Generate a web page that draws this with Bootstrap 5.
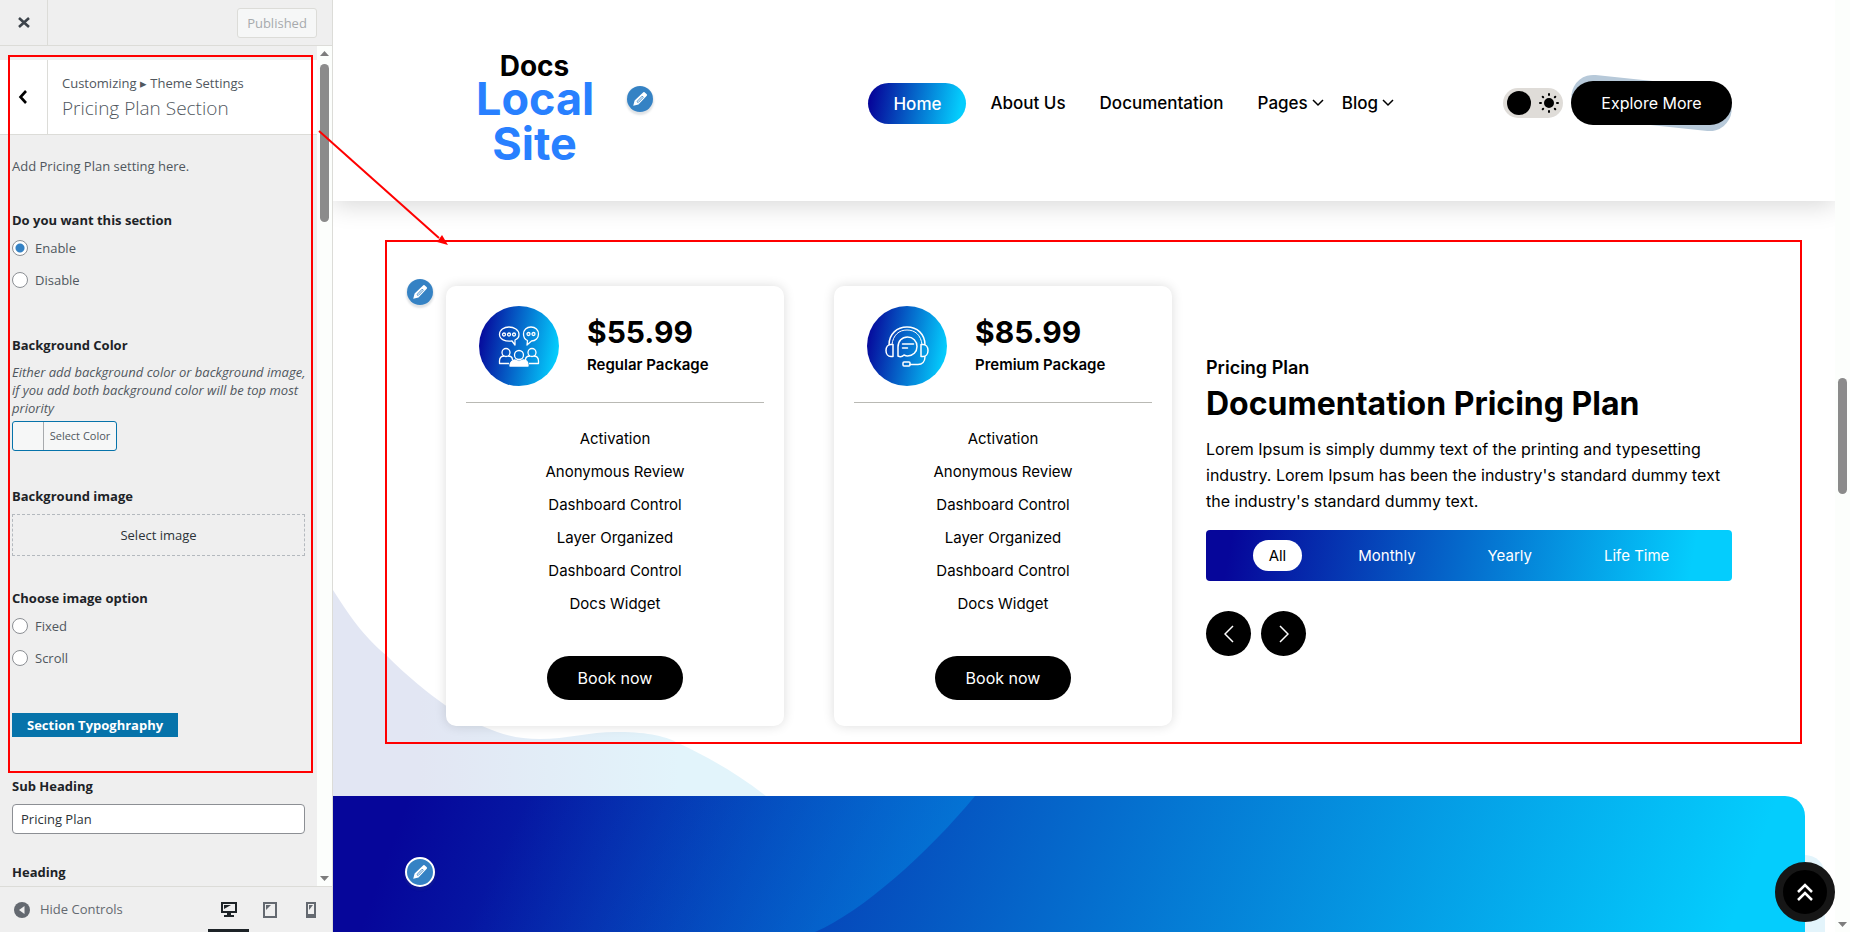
<!DOCTYPE html>
<html lang="en">
<head>
<meta charset="utf-8">
<meta name="viewport" content="width=device-width, initial-scale=1">
<title>Customizing: Pricing Plan Section</title>
<link href="https://cdn.jsdelivr.net/npm/bootstrap@5.3.0/dist/css/bootstrap.min.css" rel="stylesheet">
<style>
:root { --line: #dcdcd8; --wp-blue: #0673aa; --grad: linear-gradient(100deg, #06069a 5%, #04cdfd 92%); }
body { font-family: "Inter", sans-serif; color: #000; line-height: 24px; }
a { color: inherit; text-decoration: none; }
svg { display: block; }
.btn { --bs-btn-border-width: 0px; }

/* customizer side panel */
.customizer { width: 333px; background: #efefef; border-right: 1px solid var(--line); font-family: "Open Sans", sans-serif; font-size: 13px; line-height: 18px; color: #50575e; }
.panel-top { height: 46px; border-bottom: 1px solid var(--line); padding-right: 15px; }
.side-btn { width: 48px; border: 0; border-right: 1px solid var(--line); background: none; }
.btn-published { width: 80px; height: 30px; border: 1px solid #dcdcd8; border-radius: 3px; background: #f6f7f7; color: #a7aaad; }
.panel-title { height: 75px; margin-top: 14px; background: #fff; border-bottom: 1px solid var(--line); }
.panel-names { padding: 12px 0 0 14px; }
.crumbs { line-height: 22px; }
.panel-title h1 { font-size: 19px; line-height: 28px; font-weight: 300; color: #50575e; }
.panel-body { padding: 22px 12px 0; }
.ctl-title { margin: 0; font-size: 13px; line-height: 20px; font-weight: 700; color: #1d2327; }
.gap-l { margin-top: 39px; }
.gap-m { margin-top: 35px; }
.panel-body legend { margin-bottom: 2px; }
.radio-line { height: 32px; gap: 7px; }
.radio-line .form-check-input { width: 16px; height: 16px; margin: 0; border: 1px solid #8c8f94; background-color: #fff; }
.radio-line .form-check-input:checked { background-image: radial-gradient(circle, #3582c4 0 4px, #fff 5px); }
.hint { margin: 8px -8px 4px 0; font-style: italic; }
.btn-color { width: 105px; height: 30px; border: 1px solid var(--wp-blue); border-radius: 3px; background: #f6f7f7; font-size: 11px; color: #50575e; }
.btn-color .swatch { width: 31px; border-right: 1px solid #a7aaad; }
.btn-image { height: 42px; border: 1px dashed #b4b9be; background: none; color: #2c3338; }
.type-label { width: fit-content; padding: 2px 15px; background: var(--wp-blue); color: #fff; line-height: 20px; font-weight: 700; }
.sub-input { height: 30px; padding: 0 8px; border: 1px solid #8c8f94; border-radius: 4px; color: #2c3338; background: #fff; }
.panel-foot { height: 46px; border-top: 1px solid var(--line); padding: 0 1px 0 14px; }
.hide-btn { gap: 10px; font-size: 13px; color: #646970; }
.device { width: 41px; height: 45px; border: 0; background: none; color: #646970; place-content: center; }
.device.active { color: #1d2327; border-bottom: 3px solid #1d2327; padding-top: 3px; }
.track { flex: 0 0 15px; background: #fcfefc; padding: 5px 0; }
.thumb { width: 9px; border-radius: 5px; background: #8b8b8b; }
.above { flex: 372 1 0; }
.below { flex: 426 1 0; }

/* theme preview */
.site-header { height: 201px; padding: 5px 103px 0 143px; box-shadow: 0 4px 24px rgba(0,0,0,.16); background: #fff; }
.brand { width: 117px; margin-top: 15px; font-weight: 700; text-align: center; }
.brand-small { font-size: 28px; line-height: 20px; }
.brand-big { font-size: 45px; line-height: 45px; color: #2880ff; }
.edit-pin { width: 26px; height: 26px; padding: 0; border: 0; border-radius: 50%; background: #3582c4; color: #fff; display: grid; place-items: center; box-shadow: 0 2px 2px 1px rgba(60,80,100,.16); }
.pin-brand { margin: 0 0 8px 34px; }
.site-nav { gap: 34px; margin: 0 109px 0 auto; font-size: 17px; font-weight: 500; }
.nav-home { padding: 9px 25px 8px; margin-right: -10px; border-radius: 21px; background: var(--grad); color: #fff; }
.nav-more { gap: 18px; }
.mode { width: 60px; height: 30px; padding: 0 4px; border: 0; border-radius: 15px; background: #dfdcd8; }
.knob { width: 24px; height: 24px; border-radius: 50%; background: #000; }
.pill { border: 0; border-radius: 22px; height: 44px; background: #000; color: #fff; font-size: 16px; }
.explore { width: 161px; }
.explore-wrap::before { content: ""; position: absolute; inset: 0; border-radius: 22px; background: #b7c9d9; transform: rotate(6deg); }
.plans { padding: 85px 103px 70px 113px; }
.plan-row { display: grid; grid-template-columns: 338fr 338fr 510fr; column-gap: 50px; }
.plan { border-radius: 10px; background: #fff; box-shadow: 0 0 12px rgba(0,0,0,.14); padding: 20px 20px 26px; }
.plan-head { gap: 28px; padding: 0 13px 16px; border-bottom: 1px solid #b9b9b4; }
.plan-icon { width: 80px; height: 80px; border-radius: 50%; background: var(--grad); }
.price { font-size: 30px; line-height: 34px; font-weight: 700; }
.plan-name { font-size: 15px; line-height: 24px; font-weight: 600; }
.plan ul { margin: 19px 0 36px; font-size: 15px; line-height: 33px; }
.book { width: 136px; }
.intro { margin-left: -16px; padding-top: 68px; }
.intro h3 { font-size: 18px; line-height: 28px; font-weight: 600; }
.intro h2 { font-size: 32px; line-height: 44px; font-weight: 700; }
.intro p { margin: 10px 0 16px; font-size: 16px; line-height: 26px; }
.tabs { height: 51px; gap: 40px; border-radius: 4px; background: var(--grad); font-size: 15px; }
.tabs button { height: 31px; padding: 0 16px; border: 0; border-radius: 16px; background: none; color: #fff; }
.tabs button.on { background: #fff; color: #000; }
.arrows { gap: 10px; margin-top: 30px; }
.arrow-btn { width: 45px; height: 45px; border: 0; border-radius: 50%; background: #000; }
.banner { margin-right: 30px; border-radius: 0 20px 0 0; background: linear-gradient(110deg, #06069a 5%, #04cdfd 95%); }
.pin-plans { left: 74px; top: 78px; }
.pin-banner { left: 72px; top: 61px; width: 30px; height: 30px; border: 2px solid #fff; }
.wave { left: 0; bottom: 0; }
.tail { right: 10px; bottom: 0; width: 60px; height: 77px; border-radius: 0 20px 0 0; background: #e3f4fb; }
.to-top { right: 0; bottom: 10px; width: 60px; height: 60px; border-radius: 50%; border: 8px solid #161616; background: #000; }

/* red call-outs */
.callout { border: 2px solid #f00; pointer-events: none; }
.callout-panel { left: 8px; top: 55px; width: 305px; height: 718px; }
.callout-plans { inset: 39px 33px 52px 52px; }
.callout-arrow { left: 318px; top: 130px; pointer-events: none; }
</style>
</head>
<body class="d-flex vh-100 overflow-hidden position-relative">

<svg class="d-none">
  <symbol id="pencil" viewBox="0 0 20 20"><path fill="currentColor" d="M13.700 2.500a1 1 0 0 1 1.400 0l2.400 2.300a1 1 0 0 1 0 1.500L8.300 16 2.500 17.500 4 11.800z"/><path d="M6.700 12.800l5.800-6 1.200 1.200-5.800 6z" fill="none" stroke="#3582c4"/></symbol>
  <symbol id="chev" viewBox="0 0 12 8"><path d="M1 1l5 5 5-5" fill="none" stroke="#000" stroke-width="1.500"/></symbol>
</svg>

<aside class="customizer d-flex flex-column flex-shrink-0">
  <div class="panel-top d-flex align-items-center">
    <button class="side-btn align-self-stretch d-flex align-items-center px-3" aria-label="Close"><svg width="16" height="16"><path d="M3 3l10 9M13 3L3 12" stroke="#3c434a" stroke-width="2.600"/></svg></button>
    <button class="btn-published ms-auto p-0" disabled>Published</button>
  </div>
  <div class="d-flex flex-grow-1 overflow-hidden">
    <div class="flex-grow-1 overflow-hidden">
      <div class="panel-title d-flex">
        <button class="side-btn px-3" aria-label="Back"><svg width="16" height="16"><path d="M10 2L4.500 8l5.500 6" fill="none" stroke="#000" stroke-width="2.600"/></svg></button>
        <div class="panel-names"><div class="crumbs">Customizing ▸ Theme Settings</div><h1 class="m-0">Pricing Plan Section</h1></div>
      </div>
      <div class="panel-body">
        <p class="m-0">Add Pricing Plan setting here.</p>
        <fieldset class="gap-m">
          <legend class="ctl-title">Do you want this section</legend>
          <div class="radio-line d-flex align-items-center"><input class="form-check-input" type="radio" name="show" id="r1" checked><label for="r1">Enable</label></div>
          <div class="radio-line d-flex align-items-center"><input class="form-check-input" type="radio" name="show" id="r2"><label for="r2">Disable</label></div>
        </fieldset>
        <div class="ctl-title gap-l">Background Color</div>
        <p class="hint">Either add background color or background image, if you add both background color will be top most priority</p>
        <button class="btn-color d-flex p-0 align-items-center"><span class="swatch align-self-stretch"></span><span class="flex-grow-1">Select Color</span></button>
        <div class="ctl-title gap-m">Background image</div>
        <button class="btn-image w-100 mt-2">Select image</button>
        <fieldset class="mt-4 pt-2">
          <legend class="ctl-title">Choose image option</legend>
          <div class="radio-line d-flex align-items-center"><input class="form-check-input" type="radio" name="att" id="r3"><label for="r3">Fixed</label></div>
          <div class="radio-line d-flex align-items-center"><input class="form-check-input" type="radio" name="att" id="r4"><label for="r4">Scroll</label></div>
        </fieldset>
        <div class="type-label gap-l">Section Typoghraphy</div>
        <label class="ctl-title d-block gap-l" for="sub">Sub Heading</label>
        <input class="sub-input w-100 mt-2" id="sub" value="Pricing Plan">
        <div class="ctl-title mt-4 pt-1">Heading</div>
      </div>
    </div>
    <div class="track d-flex flex-column align-items-center">
      <svg width="9" height="5"><path d="M0 5L4.500 0 9 5z" fill="#7d7d7d"/></svg>
      <div class="thumb mt-2" style="height:158px"></div>
      <svg class="mt-auto" width="9" height="5"><path d="M0 0l4.500 5L9 0z" fill="#7d7d7d"/></svg>
    </div>
  </div>
  <div class="panel-foot d-flex align-items-center">
    <button class="btn hide-btn d-flex align-items-center p-0"><svg width="16" height="16"><circle cx="8" cy="8" r="8" fill="#646970"/><path d="M10.500 4v8L5 8z" fill="#efefef"/></svg>Hide Controls</button>
    <div class="d-flex ms-auto">
      <button class="device active d-grid" aria-label="Desktop"><svg width="16" height="17"><path fill-rule="evenodd" fill="currentColor" d="M0 1h16v11h-6v2h3v2H3v-2h3v-2H0zM2 3v7h12V3z"/><path d="M3 4h7L3 8z" fill="currentColor"/></svg></button>
      <button class="device d-grid" aria-label="Tablet"><svg width="14" height="16"><path fill-rule="evenodd" fill="currentColor" d="M0 0h14v16H0zM2 2v12h10V2z"/><path d="M3 3h5L3 8z" fill="currentColor"/></svg></button>
      <button class="device d-grid" aria-label="Mobile"><svg width="10" height="16"><path fill-rule="evenodd" fill="currentColor" d="M0 0h10v16H0zM2 2v10h6V2z"/><path d="M3 3h4L3 8z" fill="currentColor"/></svg></button>
    </div>
  </div>
</aside>

<main class="flex-grow-1 d-flex flex-column overflow-hidden position-relative">
  <header class="site-header d-flex align-items-center flex-shrink-0 position-relative z-1">
    <a href="#" class="brand"><div class="brand-small">Docs</div><div class="brand-big">Local Site</div></a>
    <button class="edit-pin pin-brand" aria-label="Edit"><svg width="18" height="18"><use href="#pencil"/></svg></button>
    <nav class="site-nav d-flex align-items-center">
      <a href="#" class="nav-home">Home</a><a href="#">About Us</a><a href="#">Documentation</a>
      <div class="nav-more d-flex">
        <a href="#" class="d-flex align-items-center gap-1">Pages <svg width="12" height="8"><use href="#chev"/></svg></a>
        <a href="#" class="d-flex align-items-center gap-1">Blog <svg width="12" height="8"><use href="#chev"/></svg></a>
      </div>
    </nav>
    <div class="d-flex align-items-center gap-2">
      <button class="mode d-flex align-items-center justify-content-between" aria-label="Dark mode"><span class="knob"></span><svg width="20" height="20" stroke="#000" stroke-width="2" stroke-linecap="round"><circle cx="10" cy="10" r="4"/><path d="M10 1v1M10 18v1M1 10h1M18 10h1M3.700 3.700l.5.5M15.800 15.800l.5.5M3.700 16.300l.5-.5M15.800 4.200l.5-.5"/></svg></button>
      <div class="explore-wrap position-relative"><button class="pill explore position-relative">Explore More</button></div>
    </div>
  </header>

  <section class="plans position-relative flex-shrink-0">
    <svg class="wave position-absolute" width="433" height="206"><defs><linearGradient id="wg"><stop offset=".2" stop-color="#e2e6f3"/><stop offset=".8" stop-color="#e2f4fb"/></linearGradient></defs><path fill="url(#wg)" d="M0 0C20 32 35 50 53 65 75 87 95 103 112 115S140 133 149 136C170 145 185 149 207 149 235 149 260 141 287 142 315 142 335 147 345 153 375 167 405 184 433 206H0z"/></svg>
    <div class="plan-row position-relative">
      <article class="plan text-center">
        <div class="plan-head d-flex align-items-center text-start">
          <div class="plan-icon d-grid align-content-center justify-content-center"><svg width="42" height="42" fill="none" stroke="#fff" stroke-width="1.300" stroke-linejoin="round"><path d="M17 20l-3-4C7 17 1.500 14 1.500 9.500 1.500 5 6 2 11 2s10 3 10 7.500c0 2.500-1.500 4.500-4 5.500zM29 20l.500-4.500C27 14.500 25.500 12 25.500 9c0-4 3-7 7.500-7s7.500 3 7.500 7-3 7-7 7z"/><circle cx="6" cy="9.500" r="1.500"/><circle cx="11" cy="9.500" r="1.500"/><circle cx="16" cy="9.500" r="1.500"/><circle cx="30.500" cy="9" r="1.500"/><circle cx="35.500" cy="9" r="1.500"/><circle cx="8" cy="27.500" r="4"/><circle cx="34" cy="27.500" r="4"/><circle cx="21" cy="30" r="4.500"/><path d="M11 38.500H1.500V36c0-3 2-5 5-5M10 31c3 0 4.500 2 4.500 4M31 38.500h9.500V36c0-3-2-5-5-5M32 31c-3 0-4.500 2-4.500 4"/><path fill="#fff" d="M12 41v-1c0-3 3-5 5-5 2 1.500 6 1.500 8 0 3 0 5 2 5 5v1z"/></svg></div>
          <div><div class="price mb-1">$55.99</div><div class="plan-name">Regular Package</div></div>
        </div>
        <ul class="list-unstyled"><li>Activation</li><li>Anonymous Review</li><li>Dashboard Control</li><li>Layer Organized</li><li>Dashboard Control</li><li>Docs Widget</li></ul>
        <button class="pill book">Book now</button>
      </article>
      <article class="plan text-center">
        <div class="plan-head d-flex align-items-center text-start">
          <div class="plan-icon d-grid align-content-center justify-content-center"><svg width="44" height="42" fill="none" stroke="#fff" stroke-width="1.500" stroke-linejoin="round" stroke-linecap="round"><path d="M4 20C4 9 12 2 22 2s18 7 18 18M8 19.500v12H6c-3 0-5-2.500-5-6s2-6 5-6zM36 19.500v12h2c3 0 5-2.500 5-6s-2-6-5-6zM40 31.500c0 5-3 8-7 8h-8M13 31V22c0-6 4-10 9.500-10S32 16 32 21.500 28 31 22.500 31c-1.500 0-2.500-.5-3.500-1-2 2-4 2-6 1zM17.500 19h11M17.500 23h5"/><path stroke-width="1" d="M7 19.500C8 10 14 5 22 5s14 5 15 14.500"/><rect x="18" y="37" width="7" height="4" rx="1"/></svg></div>
          <div><div class="price mb-1">$85.99</div><div class="plan-name">Premium Package</div></div>
        </div>
        <ul class="list-unstyled"><li>Activation</li><li>Anonymous Review</li><li>Dashboard Control</li><li>Layer Organized</li><li>Dashboard Control</li><li>Docs Widget</li></ul>
        <button class="pill book">Book now</button>
      </article>
      <div class="intro">
        <h3 class="m-0">Pricing Plan</h3>
        <h2 class="m-0">Documentation Pricing Plan</h2>
        <p>Lorem Ipsum is simply dummy text of the printing and typesetting industry. Lorem Ipsum has been the industry's standard dummy text the industry's standard dummy text.</p>
        <div class="tabs d-flex justify-content-center align-items-center"><button class="on">All</button><button>Monthly</button><button>Yearly</button><button>Life Time</button></div>
        <div class="d-flex arrows">
          <button class="arrow-btn d-grid align-content-center justify-content-center p-0" aria-label="Previous"><svg width="10" height="18"><path d="M9 1L1 9l8 8" fill="none" stroke="#fff" stroke-width="1.500"/></svg></button>
          <button class="arrow-btn d-grid align-content-center justify-content-center p-0" aria-label="Next"><svg width="10" height="18"><path d="M1 1l8 8-8 8" fill="none" stroke="#fff" stroke-width="1.500"/></svg></button>
        </div>
      </div>
    </div>
    <button class="edit-pin pin-plans position-absolute" aria-label="Edit"><svg width="18" height="18"><use href="#pencil"/></svg></button>
    <div class="callout callout-plans position-absolute"></div>
  </section>

  <div class="tail position-absolute"></div>
  <section class="banner flex-grow-1 position-relative overflow-hidden">
    <svg width="642" height="136"><defs><linearGradient id="bg" x2="1" y2=".1"><stop offset=".3" stop-color="#00b4ff" stop-opacity="0"/><stop offset="1" stop-color="#00b4ff" stop-opacity=".3"/></linearGradient></defs><path fill="url(#bg)" d="M0 0h642C595 57 530 115 482 136H0z"/></svg>
    <button class="edit-pin pin-banner position-absolute" aria-label="Edit"><svg width="18" height="18"><use href="#pencil"/></svg></button>
  </section>
  <button class="to-top position-absolute d-grid align-content-center justify-content-center p-0" aria-label="Back to top"><svg width="16" height="18" fill="none" stroke="#fff" stroke-width="2.500"><path d="M1 9l7-7 7 7M1 17l7-7 7 7"/></svg></button>
</main>

<div class="track d-flex flex-column align-items-center">
  <div class="above"></div>
  <div class="thumb" style="height:116px"></div>
  <div class="below"></div>
  <svg width="9" height="5"><path d="M0 0l4.500 5L9 0z" fill="#7d7d7d"/></svg>
</div>

<div class="callout callout-panel position-absolute"></div>
<svg class="callout-arrow position-absolute z-2" width="132" height="118"><path d="M1 1l120 107" stroke="#f00" stroke-width="2"/><path d="M130 115l-11-3 5-7z" fill="#f00"/></svg>
</body>
</html>
